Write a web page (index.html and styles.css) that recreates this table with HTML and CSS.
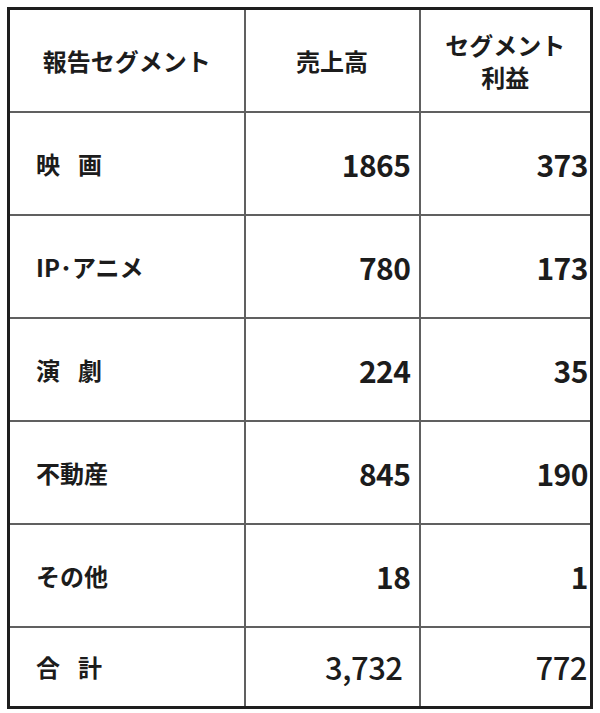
FILE: index.html
```html
<!DOCTYPE html>
<html lang="ja">
<head>
<meta charset="utf-8">
<link rel="stylesheet" href="styles.css">
</head>
<body>
<table class="seg">
  <colgroup>
    <col class="c1">
    <col class="c2">
    <col class="c3">
  </colgroup>
  <thead>
    <tr class="head">
      <th>報告セグメント</th>
      <th>売上高</th>
      <th>セグメント<br>利益</th>
    </tr>
  </thead>
  <tbody>
    <tr><td class="label">映<span class="gap"></span>画</td><td class="num">1865</td><td class="num last">373</td></tr>
    <tr><td class="label">IP･アニメ</td><td class="num">780</td><td class="num last">173</td></tr>
    <tr><td class="label">演<span class="gap"></span>劇</td><td class="num">224</td><td class="num last">35</td></tr>
    <tr><td class="label">不動産</td><td class="num">845</td><td class="num last">190</td></tr>
    <tr><td class="label">その他</td><td class="num">18</td><td class="num last">1</td></tr>
    <tr class="total"><td class="label">合<span class="gap"></span>計</td><td class="num">3,732</td><td class="num last">772</td></tr>
  </tbody>
</table>
</body>
</html>
```

FILE: styles.css
```css
html, body {
  margin: 0;
  padding: 0;
  background: #ffffff;
}

body {
  padding: 7px 0 0 7px;
  font-family: "Noto Sans CJK JP", "Noto Sans", sans-serif;
  color: #1c1c1c;
}

.seg {
  border-collapse: collapse;
  table-layout: fixed;
  width: 586px;
  border: 3px solid #1e1e1e;
}

.c1 { width: 236px; }
.c2 { width: 175px; }
.c3 { width: 172px; }

.seg th,
.seg td {
  border: 2px solid #606060;
  padding: 0;
  vertical-align: middle;
}

.head th {
  height: 101px;
  font-size: 24px;
  font-weight: 700;
  line-height: 32px;
  text-align: center;
  border-top-color: #1e1e1e;
}

.seg tbody tr {
  height: 103px;
}

.label {
  font-size: 24px;
  font-weight: 700;
  text-align: left;
  padding-left: 26px !important;
  white-space: nowrap;
}

.gap {
  display: inline-block;
  width: 18px;
}

.num {
  font-size: 30px;
  font-weight: 700;
  text-align: right;
  padding-right: 8px !important;
  letter-spacing: -0.5px;
}

.num.last {
  padding-right: 2px !important;
}

.seg tr.total {
  height: 80px;
}

.total .num {
  font-weight: 500;
  font-size: 31px;
  padding-right: 16px !important;
}

.total .num.last {
  padding-right: 3px !important;
}
```
